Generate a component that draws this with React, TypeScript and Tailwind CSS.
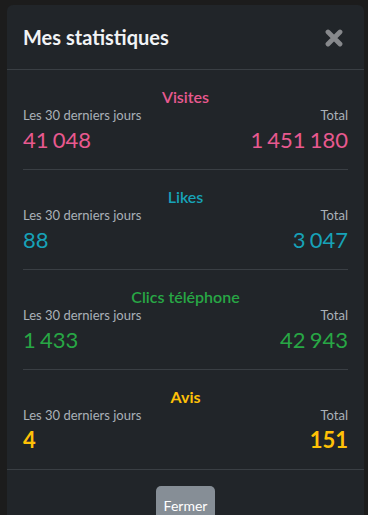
import React from "react";

type Stat = { title: string; color: string; last: string; total: string; bold?: boolean };

const stats: Stat[] = [
  { title: "Visites", color: "text-[#e8598f]", last: "41 048", total: "1 451 180" },
  { title: "Likes", color: "text-[#17a2b8]", last: "88", total: "3 047" },
  { title: "Clics téléphone", color: "text-[#28a745]", last: "1 433", total: "42 943" },
  { title: "Avis", color: "text-[#ffc107]", last: "4", total: "151", bold: true },
];

export default function App() {
  return (
    <div
      className="w-[368px] h-[515px] overflow-hidden bg-[#1c1c1c] pt-[5px]"
      style={{ fontFamily: 'Lato, "Noto Sans", sans-serif' }}
    >
      <div className="ml-[7px] w-[357px] rounded-t-[6px] bg-[#212529]">
        <div className="flex h-[65px] items-center justify-between border-b border-[#3a3f44] pl-4 pr-[21px]">
          <h5 className="text-[20px] font-bold leading-none text-[#f1f3f5]">Mes statistiques</h5>
          <svg width="18" height="18" viewBox="0 0 18 18" className="mt-[1px]">
            <path d="M3 3L15 15M15 3L3 15" stroke="#87898c" strokeWidth="4.8" strokeLinecap="round" />
          </svg>
        </div>
        <div className="px-4">
          {stats.map((s, i) => (
            <div
              key={s.title}
              className={`pt-[15px] pb-[12px] ${i < stats.length - 1 ? "border-b border-[#3a3f44]" : ""}`}
            >
              <div className={`text-center text-[16px] leading-[23px] ${s.bold ? "font-bold" : "font-semibold"} ${s.color}`}>
                {s.title}
              </div>
              <div className="flex justify-between text-[13px] leading-[15px] text-[#aab1b8]">
                <span>Les 30 derniers jours</span>
                <span>Total</span>
              </div>
              <div
                className={`flex justify-between text-[22px] leading-[34px] [word-spacing:-1.5px] ${s.bold ? "font-bold" : "font-normal"} ${s.color}`}
              >
                <span>{s.last}</span>
                <span>{s.total}</span>
              </div>
            </div>
          ))}
        </div>
        <div className="flex justify-center border-t border-[#3a3f44] pt-4 pb-4">
          <button className="h-[38px] rounded-[5px] bg-[#868e96] px-2 text-[14px] text-white">
            Fermer
          </button>
        </div>
      </div>
    </div>
  );
}
